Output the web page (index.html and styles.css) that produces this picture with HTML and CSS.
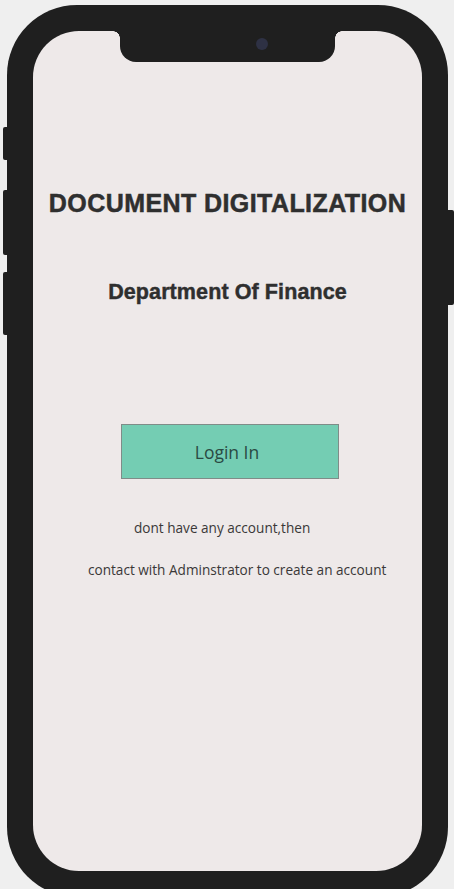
FILE: index.html
```html
<!DOCTYPE html>
<html lang="en">
<head>
<meta charset="utf-8">
<title>Document Digitalization</title>
<link rel="stylesheet" href="styles.css">
</head>
<body>
<div class="phone">
  <span class="side-btn side-btn--mute"></span>
  <span class="side-btn side-btn--vol-up"></span>
  <span class="side-btn side-btn--vol-down"></span>
  <span class="side-btn side-btn--power"></span>
  <div class="screen">
    <div class="notch"><span class="camera"></span></div>
    <h1 class="title">DOCUMENT DIGITALIZATION</h1>
    <h2 class="subtitle">Department Of Finance</h2>
    <button class="login-btn" type="button">Login In</button>
    <p class="note note--first">dont have any account,then</p>
    <p class="note note--second">contact with Adminstrator to create an account</p>
  </div>
</div>
</body>
</html>
```

FILE: styles.css
```css
html, body {
  margin: 0;
  padding: 0;
}
body {
  background: #efefef;
  overflow: hidden;
  height: 889px;
}
.phone {
  position: relative;
  box-sizing: border-box;
  width: 441px;
  height: 892px;
  margin: 5px 0 0 7px;
  padding: 26px;
  background: #1f1f1f;
  border-radius: 70px;
}
.side-btn {
  position: absolute;
  width: 5px;
  background: #1f1f1f;
}
.side-btn--mute { left: -4px; top: 122px; height: 33px; border-radius: 2px 0 0 2px; }
.side-btn--vol-up { left: -4px; top: 185px; height: 65px; border-radius: 2px 0 0 2px; }
.side-btn--vol-down { left: -4px; top: 267px; height: 63px; border-radius: 2px 0 0 2px; }
.side-btn--power { right: -6px; top: 205px; height: 95px; width: 7px; border-radius: 0 2px 2px 0; }

.screen {
  position: relative;
  height: 100%;
  background: #eee9e9;
  border-radius: 46px;
  display: flex;
  flex-direction: column;
  align-items: center;
  font-family: "Liberation Sans", Arial, sans-serif;
  color: #2f2f2f;
}
.notch {
  position: absolute;
  top: 0;
  left: 87px;
  width: 215px;
  height: 31px;
  background: #1f1f1f;
  border-radius: 0 0 16px 16px;
}
.notch::before,
.notch::after {
  content: "";
  position: absolute;
  top: 0;
  width: 7px;
  height: 7px;
}
.notch::before {
  left: -7px;
  background: radial-gradient(circle at 0 100%, transparent 6.5px, #1f1f1f 7px);
}
.notch::after {
  right: -7px;
  background: radial-gradient(circle at 100% 100%, transparent 6.5px, #1f1f1f 7px);
}
.camera {
  position: absolute;
  left: 136px;
  top: 7px;
  width: 12px;
  height: 12px;
  border-radius: 50%;
  background: #2e3144;
}
.title {
  margin: 158px 0 0;
  font-size: 25px;
  line-height: 29px;
  font-weight: 700;
  letter-spacing: 0.42px;
  -webkit-text-stroke: 0.5px #2f2f2f;
}
.subtitle {
  margin: 62px 0 0;
  font-size: 21.5px;
  line-height: 25px;
  font-weight: 700;
  letter-spacing: 0.1px;
  -webkit-text-stroke: 0.45px #2f2f2f;
}
.login-btn {
  margin: 119px 0 0 5px;
  box-sizing: border-box;
  width: 218px;
  height: 55px;
  background: #74cdb3;
  border: 1px solid #7f8c88;
  border-radius: 0;
  font-family: "Open Sans", "Noto Sans", sans-serif;
  font-size: 17.5px;
  color: #2a4a43;
  padding: 0 6px 0 0;
}
.note {
  align-self: stretch;
  margin: 0;
  font-family: "Open Sans", "Noto Sans", sans-serif;
  font-size: 13.6px;
  line-height: 18px;
  color: #3a3838;
}
.note--first {
  margin-top: 40px;
  padding-left: 101px;
}
.note--second {
  margin-top: 24px;
  padding-left: 55px;
}
```
